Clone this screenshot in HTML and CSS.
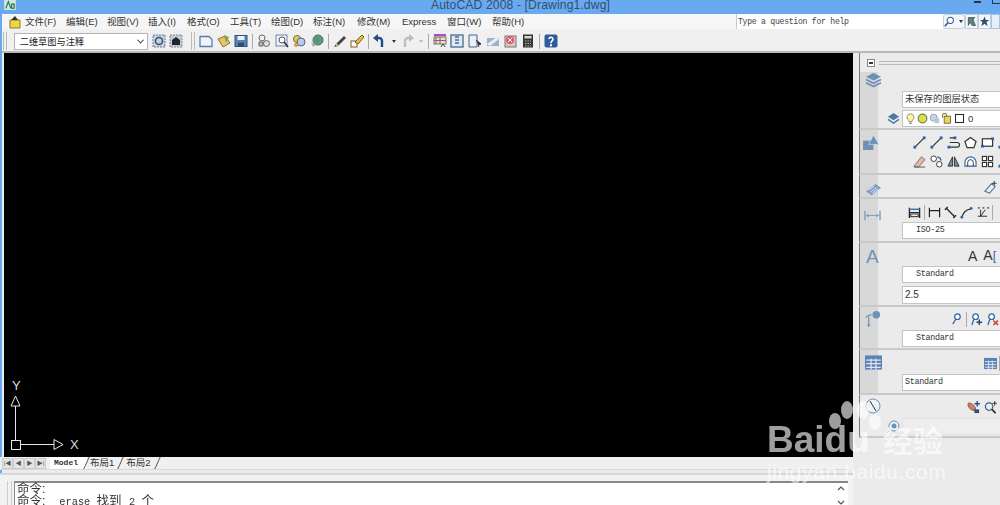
FILE: index.html
```html
<!DOCTYPE html>
<html lang="zh">
<head>
<meta charset="utf-8">
<title>AutoCAD 2008</title>
<link rel="stylesheet" href="styles.css">
</head>
<body>
<svg class="defs" width="0" height="0">
  <defs>
    <symbol id="line" viewBox="0 0 14 14"><path d="M2 12 12 2" stroke="#333" stroke-width="1.3"/><rect x="0.5" y="10.5" width="3" height="3" fill="#2b62a8"/><rect x="10.5" y="0.5" width="3" height="3" fill="#2b62a8"/></symbol>
    <symbol id="pline" viewBox="0 0 14 14"><path d="M3 7h8a2 2 0 0 1 0 5H3M3 2h5" fill="none" stroke="#333" stroke-width="1.2"/><rect x="0.5" y="10.5" width="3" height="3" fill="#2b62a8"/><rect x="7" y="0.5" width="3" height="3" fill="#2b62a8"/></symbol>
    <symbol id="poly" viewBox="0 0 14 14"><path d="M7 1.5 13 6l-2.3 6.5H3.3L1 6z" fill="#fff" stroke="#333" stroke-width="1.3"/></symbol>
    <symbol id="rect" viewBox="0 0 14 14"><rect x="1.5" y="3" width="11" height="8" fill="#fff" stroke="#333" stroke-width="1.3"/><rect x="0" y="9.5" width="3" height="3" fill="#2b62a8"/><rect x="11" y="1.5" width="3" height="3" fill="#2b62a8"/></symbol>
    <symbol id="eraser" viewBox="0 0 14 14"><path d="M1 12 9 2l4 3-7 8z" fill="#e8b7a0" stroke="#777"/><path d="M1 13h12" stroke="#555"/></symbol>
    <symbol id="copy" viewBox="0 0 14 14"><circle cx="4" cy="4" r="3" fill="#fff" stroke="#333"/><circle cx="10" cy="10" r="3" fill="#fff" stroke="#333"/><path d="M8 2a5 5 0 0 1 4 4" fill="none" stroke="#2b62a8" stroke-width="1.3"/></symbol>
    <symbol id="mirror" viewBox="0 0 14 14"><path d="M6 2v10H1zM8 2v10h5z" fill="#7a8da3" stroke="#333"/></symbol>
    <symbol id="offset" viewBox="0 0 14 14"><path d="M1 12V8a6 6 0 0 1 12 0v4z" fill="#fff" stroke="#2b62a8" stroke-width="1.2"/><path d="M4 12V8a3 3 0 0 1 6 0v4" fill="none" stroke="#333"/></symbol>
    <symbol id="array" viewBox="0 0 14 14"><g fill="#fff" stroke="#333" stroke-width="1.2"><rect x="1.5" y="1.5" width="4.5" height="4.5"/><rect x="8" y="1.5" width="4.5" height="4.5"/><rect x="1.5" y="8" width="4.5" height="4.5"/><rect x="8" y="8" width="4.5" height="4.5"/></g></symbol>
    <symbol id="brush" viewBox="0 0 14 14"><path d="M1 11 8 3l4 3-6 7z" fill="#eef2f7" stroke="#4e77a8" stroke-width="1.2"/><path d="M11 0v5M8.500 2.500h5" stroke="#333"/></symbol>
    <symbol id="dim1" viewBox="0 0 14 14"><path d="M1.5 2v11M12.5 2v11" stroke="#222" stroke-width="1.4"/><path d="M2 7h10" stroke="#222"/><path d="M1 3.5h12" stroke="#2b62a8" stroke-width="1.4"/><rect x="3" y="8.5" width="8" height="3" fill="none" stroke="#222"/></symbol>
    <symbol id="dim2" viewBox="0 0 14 14"><path d="M1.5 2v10M12.5 2v10M1.5 5h11" stroke="#222" stroke-width="1.3" fill="none"/></symbol>
    <symbol id="dim3" viewBox="0 0 14 14"><path d="M1 4 4 1M10 13l3-3M3 3l8 8" stroke="#222" stroke-width="1.4"/></symbol>
    <symbol id="dim4" viewBox="0 0 14 14"><path d="M2 13a11 11 0 0 1 10-10" fill="none" stroke="#333" stroke-width="1.4"/><circle cx="2" cy="12" r="1.5" fill="#2b62a8"/><circle cx="12" cy="2.5" r="1.5" fill="#2b62a8"/></symbol>
    <symbol id="dim5" viewBox="0 0 14 14"><path d="M2 11h10M5 4v7M10 4l-5 7" stroke="#222"/><path d="M2 2h2M7 2h2M12 2h2" stroke="#667" stroke-width="2"/></symbol>
    <symbol id="leader" viewBox="0 0 14 14"><circle cx="8" cy="4" r="3" fill="#fff" stroke="#2b62a8" stroke-width="1.3"/><path d="M6 7 3 12" stroke="#2b62a8" stroke-width="1.3"/></symbol>
    <symbol id="leadadd" viewBox="0 0 14 14"><circle cx="6" cy="4" r="3" fill="#fff" stroke="#2b62a8" stroke-width="1.3"/><path d="M4 7 2 13" stroke="#2b62a8" stroke-width="1.3"/><path d="M10 7v6M7 10h6" stroke="#26476f" stroke-width="1.6"/></symbol>
    <symbol id="leaddel" viewBox="0 0 14 14"><circle cx="6" cy="4" r="3" fill="#fff" stroke="#2b62a8" stroke-width="1.3"/><path d="M4 7 2 13" stroke="#2b62a8" stroke-width="1.3"/><path d="M8 8l5 5M13 8l-5 5" stroke="#d23a2a" stroke-width="1.6"/></symbol>
    <symbol id="table" viewBox="0 0 14 12"><rect width="14" height="12" fill="#5b83b5"/><path d="M1 4h12M1 7h12M1 10h12M5 3v9M9 3v9" stroke="#dfe8f3"/></symbol>
    <symbol id="hand" viewBox="0 0 14 14"><path d="M1 3c2-2 5 0 8 4v3H6C3 9 1 6 1 3z" fill="#d0806a" stroke="#8c4a3a"/><rect x="8" y="9" width="5" height="4" fill="#2b4f80"/><path d="M11 0v6M8 3h6" stroke="#2b4f80" stroke-width="1.5"/></symbol>
    <symbol id="zoom" viewBox="0 0 14 14"><circle cx="5.5" cy="6" r="4" fill="#e3eef8" stroke="#3d5c7d" stroke-width="1.3"/><path d="M8.5 9l4 4" stroke="#333" stroke-width="2"/><path d="M11.5 0v5M9 2.5h5" stroke="#333"/></symbol>
    <symbol id="new" viewBox="0 0 14 14"><path d="M1 2.5h9l3 3v7H1z" fill="#eef4fb" stroke="#5a7da8" stroke-width="1.3"/></symbol>
    <symbol id="open" viewBox="0 0 14 14"><path d="M1 5 8 2l5 7-7 4z" fill="#e6c36a" stroke="#8a7430"/><path d="M7 1l5 2-3 6z" fill="#7da25a"/></symbol>
    <symbol id="save" viewBox="0 0 14 14"><rect x="1" y="1.5" width="12" height="11" fill="#5a83b4" stroke="#2f527c"/><rect x="3.5" y="2" width="7" height="4" fill="#eaf0f7"/><rect x="4" y="8.5" width="6" height="4" fill="#2f4f78"/></symbol>
    <symbol id="print" viewBox="0 0 14 14"><circle cx="5" cy="4" r="3" fill="#eee" stroke="#666"/><circle cx="9.5" cy="9.5" r="3" fill="#dde" stroke="#666"/><path d="M2 8h4v4H2z" fill="#bbb" stroke="#666"/></symbol>
    <symbol id="preview" viewBox="0 0 14 14"><rect x="1" y="1" width="11" height="11" fill="#eef" stroke="#6a8ab0"/><circle cx="7" cy="6" r="3" fill="#fff" stroke="#555"/><path d="M9 8l4 5" stroke="#333" stroke-width="1.6"/></symbol>
    <symbol id="publish" viewBox="0 0 14 14"><circle cx="5" cy="5" r="3.5" fill="#e8c95a" stroke="#7a6a2a"/><circle cx="9" cy="8" r="4" fill="#b9cbe0" stroke="#4a6a8a"/><circle cx="4" cy="11" r="2" fill="#d89a3a"/></symbol>
    <symbol id="globe" viewBox="0 0 14 14"><circle cx="8" cy="6" r="5" fill="#5fa05a" stroke="#3d6d8a"/><path d="M5 4h4v3H6z" fill="#4a85c0"/><path d="M1 8l5 3-3 2z" fill="#aab"/></symbol>
    <symbol id="paint" viewBox="0 0 14 14"><path d="M1 13l2-3 8-8 2 2-8 8z" fill="#444"/><path d="M3 10l2 2" stroke="#bba" stroke-width="2"/></symbol>
    <symbol id="match" viewBox="0 0 14 14"><rect x="1" y="7" width="6" height="6" fill="#fff" stroke="#8a5a2a"/><path d="M5 8l7-7 2 2-6 7z" fill="#e8c030" stroke="#7a6020"/></symbol>
    <symbol id="undo" viewBox="0 0 14 14"><path d="M9 13V7a3 3 0 0 0-3-3H3" fill="none" stroke="#1f4f8a" stroke-width="2.4"/><path d="M5 0 0 4l5 4z" fill="#1f4f8a"/></symbol>
    <symbol id="redo" viewBox="0 0 14 14"><path d="M5 13V7a3 3 0 0 1 3-3h3" fill="none" stroke="#bdbdbd" stroke-width="2.4"/><path d="M9 0l5 4-5 4z" fill="#bdbdbd"/></symbol>
    <symbol id="props" viewBox="0 0 14 14"><path d="M1 1h12" stroke="#b04ac0" stroke-width="2.5"/><rect x="1" y="3" width="12" height="7" fill="#e9dcc0" stroke="#777"/><path d="M3 3v7M7 3v7M1 6.5h12" stroke="#866"/><path d="M8 13l2-3 2 3" stroke="#345" fill="none"/></symbol>
    <symbol id="dc" viewBox="0 0 14 14"><rect x="1" y="1" width="12" height="12" fill="#dfe9f4" stroke="#49698f" stroke-width="1.3"/><path d="M5 3h4M5 6h4M5 9h4" stroke="#49698f" stroke-width="1.4"/></symbol>
    <symbol id="sheet" viewBox="0 0 14 14"><path d="M1 1h8v12H1z" fill="#eaf0f7" stroke="#49698f"/><path d="M8 6l5 4-3 1 1 2" fill="#333" stroke="#333"/></symbol>
    <symbol id="tool" viewBox="0 0 14 14"><path d="M1 4h12v8H1z" fill="#9fb3c8"/><path d="M1 10l10-7 2 2-9 7z" fill="#e8eef4"/></symbol>
    <symbol id="mark" viewBox="0 0 14 14"><rect x="1" y="2" width="11" height="11" fill="#d8c6c6" stroke="#777"/><circle cx="6" cy="6" r="4" fill="#e25a6a"/><path d="M4 4l4 4M8 4 4 8" stroke="#fff"/></symbol>
    <symbol id="calc" viewBox="0 0 14 14"><rect x="2" y="0.5" width="10" height="13" fill="#333"/><rect x="3.5" y="2" width="7" height="2.5" fill="#cfe0c8"/><path d="M4 7h6M4 9.5h6M4 12h6" stroke="#bbb" stroke-dasharray="1.5 1"/></symbol>
    <symbol id="help" viewBox="0 0 14 14"><rect x="0.5" y="0.5" width="13" height="13" rx="2" fill="#2d5c9b"/><path d="M5 5a2 2 0 1 1 3 2c-1 .7-1 1-1 2.2" fill="none" stroke="#fff" stroke-width="1.6"/><rect x="6" y="10.3" width="2" height="2" fill="#fff"/></symbol>
    <symbol id="wsset" viewBox="0 0 14 14"><rect x="1" y="1" width="12" height="12" fill="#c3d2e1" stroke="#6a7f95" stroke-dasharray="2 1"/><circle cx="7" cy="7" r="3.5" fill="none" stroke="#3d5470" stroke-width="1.6"/></symbol>
    <symbol id="wssave" viewBox="0 0 14 14"><rect x="1" y="1" width="12" height="12" fill="#c7ccd2" stroke="#888" stroke-dasharray="2 1"/><path d="M3 11V6l4-3 4 3v5z" fill="#1d2630"/></symbol>
  </defs>
</svg>

<div class="window">
  <header class="titlebar">
    <svg class="app" viewBox="0 0 14 12"><rect width="14" height="12" fill="#cfe8d8"/><path d="M2 10 5 2l3 8M9 10V5h3v5z" fill="none" stroke="#1b6a50" stroke-width="1.3"/></svg>
    <span class="title">AutoCAD 2008 - [Drawing1.dwg]</span>
    <span class="winctl"><i class="wmin"></i><i class="wmax"></i></span>
  </header>

  <nav class="menubar">
    <svg class="doc" viewBox="0 0 14 14"><path d="M2 5h10v8H2z" fill="#f2d640" stroke="#8a7a20"/><path d="M3 5 7 1l3 4z" fill="#333"/></svg>
    <span class="m w41">文件(F)</span><span class="m w41">编辑(E)</span><span class="m w41">视图(V)</span><span class="m w39">插入(I)</span><span class="m w43">格式(O)</span><span class="m w41">工具(T)</span><span class="m w42">绘图(D)</span><span class="m w44">标注(N)</span><span class="m w45">修改(M)</span><span class="m w45">Express</span><span class="m w45">窗口(W)</span><span class="m">帮助(H)</span>
    <div class="help">
      <span class="helpbox">Type a question for help</span>
      <span class="hbtn wide"><svg class="i12" viewBox="0 0 14 14"><circle cx="8" cy="5.5" r="4" fill="#fff" stroke="#2f5c8f" stroke-width="1.3"/><path d="M5 8.5 1 13" stroke="#2f5c8f" stroke-width="2"/></svg><i class="drop dark"></i></span>
      <span class="hbtn"><svg class="i12" viewBox="0 0 14 14"><path d="M3 2h8l-2 3 3 7H8L5 8 3 12z" fill="#5a8a70" stroke="#2f4f60"/></svg></span>
      <span class="hbtn"><svg class="i12" viewBox="0 0 14 14"><path d="m7 1 1.8 4H13l-3.400 2.700L11 13 7 10l-4 3 1.400-5.300L1 5h4.200z" fill="#2f4f78"/></svg></span>
      <span class="hbtn last"></span>
    </div>
  </nav>

  <div class="toolbar">
    <span class="grip"></span>
    <span class="combo"><span class="ctext">二维草图与注释</span><i class="chev"></i></span>
    <svg class="t"><use href="#wsset"/></svg>
    <svg class="t"><use href="#wssave"/></svg>
    <span class="grip g2"></span>
    <svg class="t"><use href="#new"/></svg>
    <svg class="t"><use href="#open"/></svg>
    <svg class="t"><use href="#save"/></svg>
    <i class="sep"></i>
    <svg class="t"><use href="#print"/></svg>
    <svg class="t"><use href="#preview"/></svg>
    <svg class="t"><use href="#publish"/></svg>
    <svg class="t"><use href="#globe"/></svg>
    <i class="sep"></i>
    <svg class="t"><use href="#paint"/></svg>
    <svg class="t"><use href="#match"/></svg>
    <i class="sep"></i>
    <svg class="t"><use href="#undo"/></svg>
    <i class="drop dark"></i>
    <svg class="t"><use href="#redo"/></svg>
    <i class="drop"></i>
    <i class="sep"></i>
    <svg class="t"><use href="#props"/></svg>
    <svg class="t"><use href="#dc"/></svg>
    <svg class="t"><use href="#sheet"/></svg>
    <svg class="t"><use href="#tool"/></svg>
    <svg class="t"><use href="#mark"/></svg>
    <svg class="t"><use href="#calc"/></svg>
    <i class="sep"></i>
    <svg class="t"><use href="#help"/></svg>
  </div>

  <div class="main">
    <div class="left">
      <div class="drawing">
        <svg class="ucs" width="84" height="76" viewBox="0 0 84 76">
          <g fill="none" stroke="#e6e6e6">
            <path d="M15.500 27v34M20.500 65.500H54"/>
            <path d="M15.500 17 20 27H11z"/>
            <rect x="11.500" y="61.500" width="9" height="9"/>
            <path d="M54 60.500 63 65.500 54 70.500z"/>
          </g>
          <text x="12" y="11" class="axis">Y</text>
          <text x="70" y="70" class="axis">X</text>
        </svg>
      </div>
      <div class="tabs">
        <span class="nav">|◀</span><span class="nav">◀</span><span class="nav">▶</span><span class="nav">▶|</span>
        <span class="tab active">Model</span><span class="tab">布局1</span><span class="tab">布局2</span>
      </div>
      <div class="cmd">
        <span class="cmdgrip"></span>
        <div class="cmdbox">
          <p>命令:</p>
          <p>命令:<span class="lat">  erase </span>找到<span class="lat"> 2 </span>个</p>
          <svg class="scroll" width="8" height="24" viewBox="0 0 8 24"><path d="M1 7l3-3 3 3M1 18l3 3 3-3" fill="none" stroke="#555" stroke-width="1.200"/></svg>
        </div>
      </div>
    </div>

    <aside class="panel">
      <div class="phead"><span class="minus"></span><span class="dbl"></span></div>

      <section class="sec s1">
        <div class="strip"><svg class="big" viewBox="0 0 18 16"><path d="M9 0l8 4-8 4-8-4z" fill="#6d8fb8"/><path d="M1 7l8 4 8-4M1 10.500l8 4 8-4" fill="none" stroke="#6d8fb8" stroke-width="1.800"/></svg></div>
        <div class="body">
          <div class="field cn">未保存的图层状态</div>
          <div class="layerrow">
            <svg class="layicon" viewBox="0 0 14 14"><path d="M7 1l6 4-6 4-6-4z" fill="#4e77a8"/><path d="M1 8l6 4 6-4" fill="none" stroke="#4e77a8" stroke-width="1.600"/></svg>
            <div class="field lay">
              <svg class="i12" viewBox="0 0 14 14"><path d="M7 1a4.500 4.500 0 0 0-2 8.500V11h4V9.500A4.500 4.500 0 0 0 7 1z" fill="#fbf5a5" stroke="#777"/><path d="M5 13h4" stroke="#555"/></svg>
              <svg class="i12" viewBox="0 0 14 14"><circle cx="7" cy="7" r="5.500" fill="#e7d94a" stroke="#5b8a4a" stroke-width="1.500"/></svg>
              <svg class="i12" viewBox="0 0 14 14"><circle cx="6" cy="6" r="4.500" fill="#c8d4de" stroke="#8a9aa8"/><rect x="7" y="7" width="6" height="6" fill="#b8c6d4"/></svg>
              <svg class="i12" viewBox="0 0 14 14"><rect x="4" y="4" width="8" height="9" fill="#e7d94a" stroke="#555"/><path d="M2 6V3a2.500 2.500 0 0 1 5 0v2" fill="none" stroke="#8a7a20" stroke-width="1.300"/></svg>
              <i class="swatch"></i><span class="zero">0</span>
            </div>
          </div>
        </div>
      </section>

      <section class="sec s2">
        <div class="strip"><svg class="big" viewBox="0 0 18 16"><rect x="0" y="6" width="11" height="10" fill="#6d8fb8"/><path d="M11 0l6 10H6z" fill="#6d8fb8" stroke="#eee" stroke-width=".6"/></svg></div>
        <div class="body icons2">
          <div class="irow"><svg class="p"><use href="#line"/></svg><svg class="p"><use href="#line"/></svg><svg class="p"><use href="#pline"/></svg><svg class="p"><use href="#poly"/></svg><svg class="p"><use href="#rect"/></svg><svg class="p"><use href="#line"/></svg></div>
          <div class="irow"><svg class="p"><use href="#eraser"/></svg><svg class="p"><use href="#copy"/></svg><svg class="p"><use href="#mirror"/></svg><svg class="p"><use href="#offset"/></svg><svg class="p"><use href="#array"/></svg><svg class="p"><use href="#line"/></svg></div>
        </div>
      </section>

      <section class="sec s3">
        <div class="strip"><svg class="big" viewBox="0 0 18 16"><path d="M1 10 11 2l6 4-10 8z" fill="#7e9cc0"/><path d="M4 9l6-5M6 11l6-5M8 12l6-5" stroke="#e8eef5"/></svg></div>
        <div class="body end"><svg class="p"><use href="#brush"/></svg></div>
      </section>

      <section class="sec s4">
        <div class="strip"><svg class="big" viewBox="0 0 18 16"><path d="M1 3v10M17 3v10" stroke="#7e9cc0" stroke-width="1.500"/><path d="M2 8h14" stroke="#7e9cc0"/><path d="M2 8l3-2v4zM16 8l-3-2v4z" fill="#7e9cc0"/></svg></div>
        <div class="body">
          <div class="irow dimrow"><svg class="p"><use href="#dim1"/></svg><i class="vs"></i><svg class="p"><use href="#dim2"/></svg><svg class="p"><use href="#dim3"/></svg><svg class="p"><use href="#dim4"/></svg><svg class="p"><use href="#dim5"/></svg><i class="vs"></i></div>
          <div class="field mono ind">ISO-25</div>
        </div>
      </section>

      <section class="sec s5">
        <div class="strip"><span class="biga">A</span></div>
        <div class="body">
          <div class="irow textrow"><span class="ta">A</span><span class="ta">A<b>[</b></span><i class="vs"></i></div>
          <div class="field mono ind">Standard</div>
          <div class="field plain">2.5</div>
        </div>
      </section>

      <section class="sec s6">
        <div class="strip"><svg class="big" viewBox="0 0 18 18"><path d="M2 7c2-2 4-3 6-3M5 6v11" fill="none" stroke="#7e9cc0" stroke-width="1.500"/><path d="M3 14l2 3 2-3z" fill="#7e9cc0"/><circle cx="13" cy="4" r="4" fill="#6d8fb8"/></svg></div>
        <div class="body">
          <div class="irow mlrow"><svg class="p"><use href="#leader"/></svg><i class="vs"></i><svg class="p"><use href="#leadadd"/></svg><svg class="p"><use href="#leaddel"/></svg></div>
          <div class="field mono ind">Standard</div>
        </div>
      </section>

      <section class="sec s7">
        <div class="strip"><svg class="big" viewBox="0 0 14 12"><use href="#table"/></svg></div>
        <div class="body">
          <div class="irow tblrow"><svg class="p"><use href="#table"/></svg><i class="vs"></i></div>
          <div class="field mono">Standard</div>
        </div>
      </section>

      <section class="sec s8">
        <svg class="compass" viewBox="0 0 16 16"><circle cx="8" cy="8" r="7" fill="#eef2f7" stroke="#6d8fb8"/><path d="M5 3l6 10" stroke="#333"/></svg>
        <div class="body">
          <div class="irow navrow"><svg class="p"><use href="#hand"/></svg><svg class="p"><use href="#zoom"/></svg><i class="vs"></i></div>
          <div class="lastrow">
            <svg class="pin" viewBox="0 0 14 14"><circle cx="8" cy="6" r="5" fill="#eef2f7" stroke="#6d8fb8"/><circle cx="8" cy="6" r="2.500" fill="#6d8fb8"/><path d="M4 10l-3 3" stroke="#888"/></svg>
            <div class="field faint"></div>
          </div>
        </div>
      </section>
    </aside>
  </div>
</div>

<div class="mark">
  <svg class="paw" width="60" height="60" viewBox="0 0 60 60">
    <ellipse cx="6" cy="21" rx="6" ry="8"/>
    <ellipse cx="18" cy="10" rx="6" ry="9"/>
    <ellipse cx="34" cy="10" rx="6" ry="9"/>
    <ellipse cx="46" cy="22" rx="6" ry="8"/>
  </svg>
  <span class="bd">Baidu</span>
  <span class="jy">经验</span>
  <span class="url">jingyan.baidu.com</span>
</div>
</body>
</html>
```
FILE: styles.css
```css
* { box-sizing: border-box; }
html, body { margin: 0; height: 505px; overflow: hidden; }
body { position: relative; font-family: "Liberation Sans", "Noto Sans CJK SC", sans-serif; background: #ececec; color: #222; }
.defs { position: absolute; }
p { margin: 0; }
i { display: block; font-style: normal; }

.window { display: flex; flex-direction: column; width: 1000px; height: 505px; background: #69a9f0; filter: blur(.3px); }

.titlebar { flex: none; height: 14px; background: #69a9f0; position: relative; display: flex; justify-content: center; overflow: hidden; }
.app { position: absolute; left: 3px; top: 0; width: 14px; height: 10px; }
.title { font-size: 12.200px; line-height: 10px; color: #33506f; margin-left: 41px; letter-spacing: .1px; }
.winctl { position: absolute; right: 0; top: 0; display: flex; align-items: flex-start; gap: 11px; }
.wmin { width: 7px; height: 2px; margin-top: 1px; background: #24364d; }
.wmax { width: 8px; height: 4px; border: 1px solid #24364d; border-top: 0; border-right: 0; }

.menubar { flex: none; height: 15px; margin-left: 2px; background: #f6f6f6; display: flex; align-items: center; padding-left: 6px; font-size: 9.500px; color: #333; }
.doc { width: 14px; height: 14px; margin-right: 3px; flex: none; }
.m { flex: none; white-space: nowrap; line-height: 15px; }
.w39 { width: 39px; } .w41 { width: 41px; } .w42 { width: 42px; } .w43 { width: 43px; } .w44 { width: 44px; } .w45 { width: 45px; }
.help { margin-left: auto; display: flex; height: 15px; align-items: stretch; }
.helpbox { width: 207px; background: #fff; border-left: 1px solid #ccc; padding-left: 1px; font: 8.200px/15px "Liberation Mono", monospace; letter-spacing: -.3px; color: #444; }
.hbtn { width: 13px; background: #f4f6f9; border: 1px solid #c4cfdc; display: flex; align-items: center; justify-content: center; }
.hbtn.wide { width: 22px; justify-content: flex-start; border-radius: 3px; gap: 3px; }
.hbtn.last { width: 9px; border-color: #a9c3e2; background: #e6eef8; }
.i12 { width: 11px; height: 11px; flex: none; }

.toolbar { flex: none; height: 24px; margin-left: 2px; background: #f0f0f0; border-bottom: 2px solid #b8b8b8; display: flex; align-items: center; gap: 3.750px; padding-top: 2px; }
.grip { width: 4px; height: 18px; border-left: 1px solid #bbb; border-right: 1px solid #bbb; flex: none; margin-left: 1px; margin-right: -1px; }
.g2 { margin: 0 0 0 4px; }
.combo { width: 134px; height: 17px; margin-left: 4px; background: #fff; border: 1px solid #b5b5b5; display: flex; align-items: center; justify-content: space-between; padding: 0 4px 0 5px; font-size: 9.200px; flex: none; }
.chev { width: 5px; height: 5px; border: solid #333; border-width: 0 1.500px 1.500px 0; transform: rotate(45deg) translate(-1px, -1px); }
.t { width: 14px; height: 14px; flex: none; }
.sep { width: 1px; height: 15px; background: #aaa; flex: none; }
.drop { width: 0; height: 0; border: 2.500px solid transparent; border-top: 3px solid #bbb; border-bottom: 0; flex: none; margin: 0 1px; }
.drop.dark { border-top-color: #2a3a55; }

.main { flex: 1; display: flex; min-height: 0; }
.left { width: 851px; flex: none; margin-left: 2px; background: #ececec; display: flex; flex-direction: column; }
.drawing { margin-left: 2px; height: 404px; background: #000; position: relative; flex: none; }
.ucs { position: absolute; left: -4px; top: 326px; }
.axis { font: 13px "Liberation Sans", sans-serif; fill: #ddd; }

.tabs { flex: none; height: 13px; background: #f0f0f0; display: flex; align-items: center; padding-left: 2px; border-bottom: 1px solid #d8d8d8; margin-left: -2px; }
.nav { width: 11px; height: 11px; font-size: 6px; line-height: 9px; text-align: center; color: #555; background: #e4e4e4; border: 1px solid #ccc; flex: none; }
.tab { padding: 0 9px 0 3px; height: 12px; line-height: 12px; color: #333; position: relative; flex: none; font-size: 9.500px; }
.tab::after { content: ""; position: absolute; right: 2px; top: 0; bottom: 0; width: 1px; background: #555; transform: skewX(-24deg); }
.tab.active { background: #fff; font: bold 8px/12px "Liberation Mono", monospace; margin-left: 4px; padding: 0 9px 0 4px; }
.tab.active::after { right: 0; }

.cmd { flex: 1; display: flex; margin: 3px 0 0 -2px; border-top: 2px solid #d6d6d6; padding: 6px 0 0 7px; background: #f2f2f2; min-height: 0; }
.cmdgrip { width: 5px; margin-right: 2px; border-left: 1px solid #ccc; border-right: 1px solid #ccc; height: 30px; flex: none; }
.cmdbox { flex: 1; margin-right: 5px; background: #fff; border-top: 2px solid #888; border-left: 1px solid #888; padding-left: 2px; font-size: 12.500px; line-height: 12px; color: #333; position: relative; white-space: nowrap; }
.lat { font: 10.300px/12px "Liberation Mono", monospace; white-space: pre; margin-left: 1.500px; }
.scroll { position: absolute; right: 3px; top: 0; }

.panel { flex: 1; min-width: 0; background: #ebebeb; padding-left: 6px; overflow: hidden; }
.phead { height: 19px; display: flex; align-items: center; padding-left: 7px; gap: 4px; border-left: 1px solid #777; }
.minus { width: 8px; height: 8px; background: #fff; border: 1px solid #888; position: relative; flex: none; }
.minus::after { content: ""; position: absolute; left: 1px; right: 1px; top: 2px; height: 2px; background: #333; }
.dbl { flex: 1; height: 4px; border-top: 1px solid #bbb; border-bottom: 1px solid #bbb; }

.sec { display: flex; border-left: 1px solid #777; border-bottom: 2px solid #c9c9c9; width: 147px; }
.s1 { height: 58px; } .s2 { height: 45px; } .s3 { height: 24px; } .s4 { height: 44px; }
.s5 { height: 64px; } .s6 { height: 43px; } .s7 { height: 45px; } .s8 { height: 43px; position: relative; }
.strip { width: 18px; flex: none; background: #d8d8d8; display: flex; justify-content: flex-start; align-items: flex-start; padding-left: 5px; padding-top: 1px; }
.s2 .strip { padding-top: 5px; padding-left: 3px; }
.s3 .strip { padding-top: 7px; }
.s4 .strip { padding-top: 9px; padding-left: 4px; }
.s5 .strip { padding-top: 4px; padding-left: 6px; }
.s6 .strip { padding-top: 4px; padding-left: 4px; }
.s7 .strip { padding-top: 5px; }
.big { width: 17px; height: 15px; flex: none; }
.s6 .big { height: 17px; }
.biga { font-size: 19px; line-height: 20px; color: #6d8fb8; }
.body { flex: 1; min-width: 0; padding-left: 24px; display: flex; flex-direction: column; }
.body.end { align-items: flex-end; padding-right: 9px; padding-top: 6px; }
.field { width: 120px; height: 17px; flex: none; background: #fff; border: 1px solid #c4c4c4; line-height: 15px; font-size: 10px; padding-left: 2px; white-space: nowrap; color: #333; }
.field.cn { font-size: 9.300px; }
.s1 .body { padding-top: 19px; gap: 2px; }
.layerrow { display: flex; align-items: center; margin-left: -15px; gap: 2px; }
.layicon { width: 13px; height: 13px; flex: none; }
.lay { display: flex; align-items: center; gap: 1px; }
.swatch { width: 9px; height: 9px; border: 1px solid #222; background: #fff; flex: none; margin-left: 2px; }
.zero { margin-left: 3px; font-size: 9.500px; }
.mono { font: 8.400px/15px "Liberation Mono", monospace; letter-spacing: -.3px; }
.ind { padding-left: 13px; }
.plain { height: 18px; font-size: 10px; margin-top: 3px; }

.irow { display: flex; align-items: center; flex: none; }
.p { width: 13px; height: 13px; flex: none; }
.icons2 { padding-left: 35px; padding-top: 6px; gap: 6px; }
.icons2 .irow { gap: 4px; }
.vs { width: 1px; height: 15px; background: #aaa; flex: none; }
.dimrow { gap: 3px; padding: 6px 0 2px 6px; }
.textrow { padding: 5px 0 3px 66px; gap: 6px; height: 23px; }
.ta { font-size: 14px; line-height: 14px; color: #333; }
.ta b { color: #2b62a8; font-weight: 400; font-size: 12px; }
.mlrow { padding: 4px 0 3px 48px; gap: 3px; height: 23px; }
.tblrow { padding: 6px 0 3px 82px; gap: 2px; height: 24px; }
.navrow { padding: 4px 0 2px 65px; gap: 4px; height: 23px; }
.lastrow { display: flex; align-items: center; margin-left: -9px; gap: 1px; }
.pin { width: 14px; height: 14px; flex: none; margin-left: -7px; margin-right: 1px; }
.field.faint { background: #eeeeee; border-color: #e2e2e2; }
.s8 .body { padding-left: 42px; }
.compass { position: absolute; left: 5px; top: 3px; width: 16px; height: 16px; }

.mark { position: absolute; left: 0; top: 0; width: 1000px; height: 505px; pointer-events: none; color: rgba(255,255,255,.62); }
.paw { position: absolute; left: 829px; top: 400px; fill: rgba(255,255,255,.62); }
.bd { position: absolute; left: 767px; top: 417px; font: bold 37px/46px "Liberation Sans", sans-serif; }
.jy { position: absolute; left: 883px; top: 420px; font: bold 30px/38px "Noto Sans CJK SC", sans-serif; }
.url { position: absolute; left: 767px; top: 460px; font: 21px/24px "Liberation Sans", sans-serif; letter-spacing: .6px; }
```
